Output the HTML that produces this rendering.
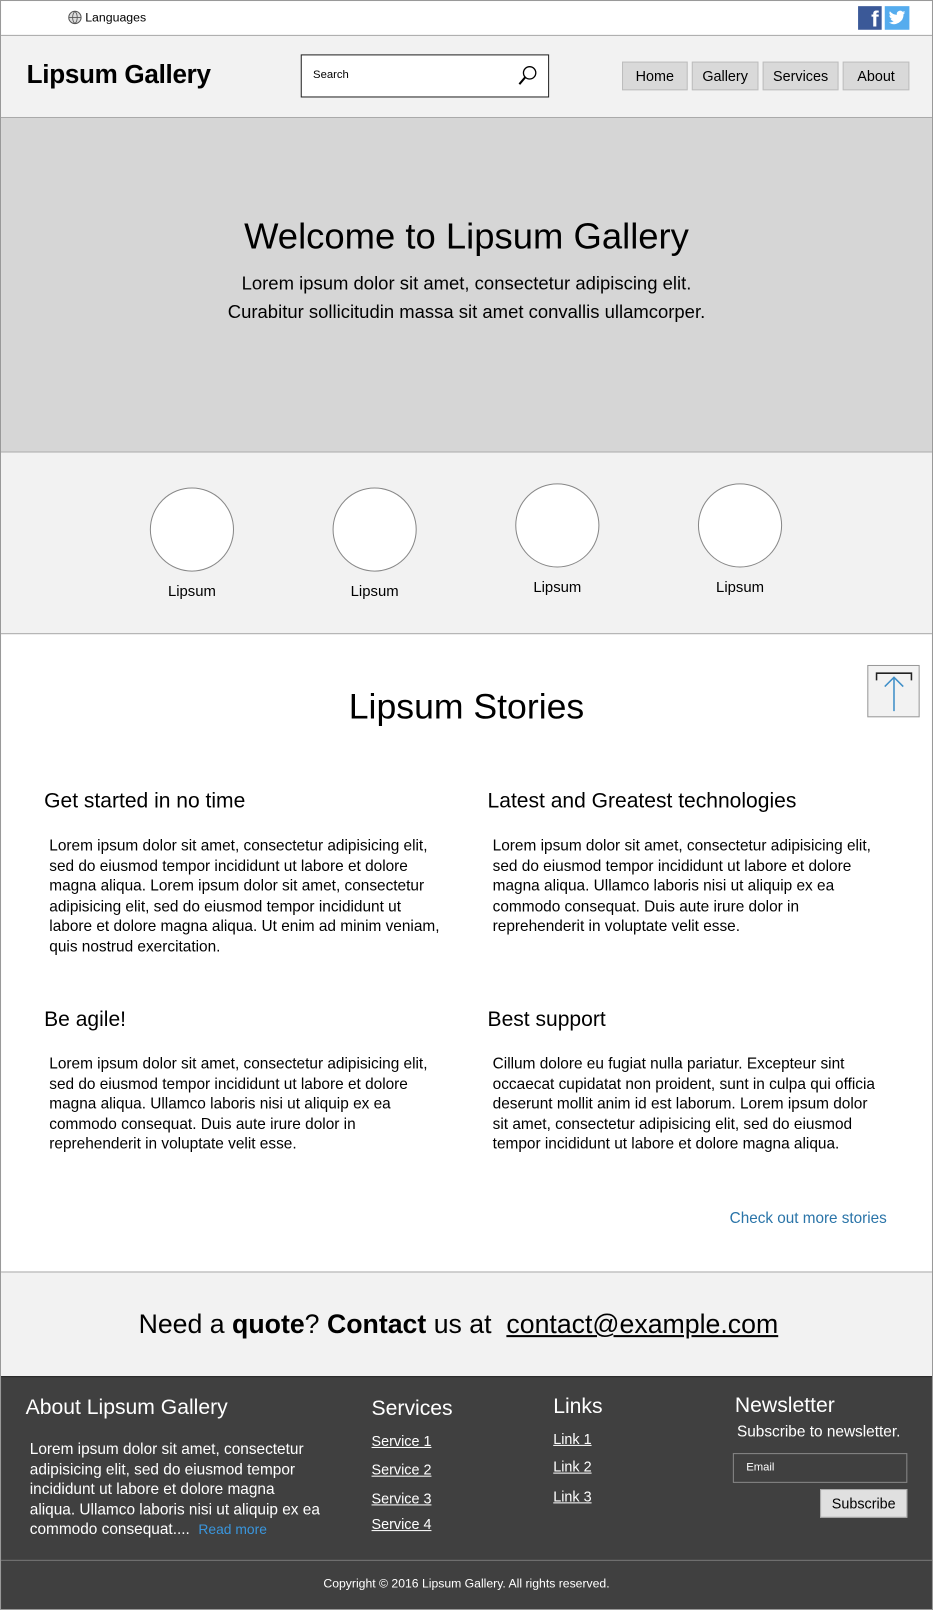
<!DOCTYPE html>
<html><head><meta charset="utf-8">
<style>
*{margin:0;padding:0;box-sizing:border-box}
html,body{width:933px;height:1610px;overflow:hidden;background:#fff}
#w{position:absolute;left:0;top:0;width:909px;height:1569px;transform:scale(1.0264,1.0262);transform-origin:0 0;font-family:"Liberation Sans",sans-serif;color:#000}
.a{position:absolute}
.sec{position:absolute;left:1px;width:907px}
.nav{position:absolute;top:60px;height:28px;background:#d9d9d9;border:1px solid #bdbdbd;font-size:14px;text-align:center;line-height:26px}
.circ{position:absolute;width:82px;height:82px;border-radius:50%;border:1px solid #888;background:#fff}
.lbl{position:absolute;font-size:14.5px;width:100px;text-align:center}
.h3{position:absolute;font-size:20.5px;white-space:nowrap}
.p{position:absolute;font-size:15px;line-height:19.5px;white-space:nowrap}
.fl{color:#fff;text-decoration:underline;font-size:14px;position:absolute}
</style></head><body><div id="w">
<div class="a" style="left:0;top:0;width:909px;height:1569px;border:1px solid #999"></div>
<!-- top bar -->
<svg class="a" style="left:66px;top:10px" width="14" height="14" viewBox="0 0 14 14"><circle cx="7" cy="7" r="6" fill="#ddd" stroke="#555"/><path d="M1 7h12M7 1c-3 3-3 9 0 12M7 1c3 3 3 9 0 12" fill="none" stroke="#555" stroke-width=".8"/></svg>
<div class="a" style="left:83px;top:10px;font-size:12px">Languages</div>
<div class="a" style="left:836px;top:6px;width:23px;height:23px;background:#3b5998;color:#fff;font-weight:bold;font-size:22px;text-align:right;padding-right:3px;line-height:26px;overflow:hidden">f</div>
<div class="a" style="left:862px;top:6px;width:24px;height:23px;background:#55acee">
<svg width="24" height="23" viewBox="0 0 24 23"><path d="M20 6c-.6.3-1.2.4-1.9.5.7-.4 1.2-1 1.4-1.8-.6.4-1.3.6-2.1.8a3.3 3.3 0 0 0-5.6 3A9.3 9.3 0 0 1 5 5a3.3 3.3 0 0 0 1 4.4c-.5 0-1-.2-1.5-.4 0 1.600 1.100 2.900 2.600 3.200-.5.100-1 .200-1.500.100.400 1.300 1.600 2.300 3.100 2.300A6.600 6.600 0 0 1 4 16a9.300 9.300 0 0 0 14.300-8.300c.7-.5 1.200-1 1.700-1.700z" fill="#fff"/></svg></div>
<!-- header -->
<div class="sec" style="top:34px;height:81px;background:#f2f2f2;border-top:1px solid #aaa;border-bottom:1px solid #aaa"></div>
<div class="a" style="left:26px;top:59px;font-size:25.4px;font-weight:bold;letter-spacing:-0.3px">Lipsum Gallery</div>
<div class="a" style="left:293px;top:53px;width:242px;height:42px;border:1px solid #222;background:#fff"></div>
<div class="a" style="left:305px;top:67px;font-size:11px">Search</div>
<svg class="a" style="left:503px;top:63px" width="22" height="22" viewBox="0 0 22 22"><circle cx="13" cy="8" r="6" fill="none" stroke="#000" stroke-width="1.3"/><path d="M9 12 3 19" stroke="#000" stroke-width="2"/></svg>
<div class="nav" style="left:606px;width:64px">Home</div>
<div class="nav" style="left:674px;width:65px">Gallery</div>
<div class="nav" style="left:743px;width:74px">Services</div>
<div class="nav" style="left:821px;width:65px">About</div>
<!-- hero -->
<div class="sec" style="top:115px;height:326px;background:#d6d6d6;border-bottom:1px solid #aaa"></div>
<div class="a" style="left:0;width:909px;top:210px;text-align:center;font-size:35.5px">Welcome to Lipsum Gallery</div>
<div class="a" style="left:0;width:909px;top:262px;text-align:center;font-size:18px;line-height:28px">Lorem ipsum dolor sit amet, consectetur adipiscing elit.<br>Curabitur sollicitudin massa sit amet convallis ullamcorper.</div>
<!-- circles -->
<div class="sec" style="top:441px;height:177px;background:#f2f2f2;border-bottom:1px solid #aaa"></div>
<div class="circ" style="left:146px;top:475px"></div><div class="lbl" style="left:137px;top:569px">Lipsum</div>
<div class="circ" style="left:324px;top:475px"></div><div class="lbl" style="left:315px;top:569px">Lipsum</div>
<div class="circ" style="left:502px;top:471px"></div><div class="lbl" style="left:493px;top:565px">Lipsum</div>
<div class="circ" style="left:680px;top:471px"></div><div class="lbl" style="left:671px;top:565px">Lipsum</div>
<!-- stories -->
<div class="a" style="left:0;width:909px;top:670px;text-align:center;font-size:34.7px">Lipsum Stories</div>
<div class="a" style="left:845px;top:648px;width:51px;height:51px;border:1px solid #999;background:#f2f2f2">
<svg width="49" height="49" viewBox="0 0 49 49"><path d="M8 14V7h34v7" fill="none" stroke="#222" stroke-width="1.5"/><path d="M25 44V11M16 20l9-9 9 9" fill="none" stroke="#3f8fc8" stroke-width="1.5"/></svg></div>
<div class="h3" style="left:43px;top:769px">Get started in no time</div>
<div class="h3" style="left:475px;top:769px">Latest and Greatest technologies</div>
<div class="p" style="left:48px;top:815px">Lorem ipsum dolor sit amet, consectetur adipisicing elit,<br>sed do eiusmod tempor incididunt ut labore et dolore<br>magna aliqua. Lorem ipsum dolor sit amet, consectetur<br>adipisicing elit, sed do eiusmod tempor incididunt ut<br>labore et dolore magna aliqua. Ut enim ad minim veniam,<br>quis nostrud exercitation.</div>
<div class="p" style="left:480px;top:815px">Lorem ipsum dolor sit amet, consectetur adipisicing elit,<br>sed do eiusmod tempor incididunt ut labore et dolore<br>magna aliqua. Ullamco laboris nisi ut aliquip ex ea<br>commodo consequat. Duis aute irure dolor in<br>reprehenderit in voluptate velit esse.</div>
<div class="h3" style="left:43px;top:982px">Be agile!</div>
<div class="h3" style="left:475px;top:982px">Best support</div>
<div class="p" style="left:48px;top:1027px">Lorem ipsum dolor sit amet, consectetur adipisicing elit,<br>sed do eiusmod tempor incididunt ut labore et dolore<br>magna aliqua. Ullamco laboris nisi ut aliquip ex ea<br>commodo consequat. Duis aute irure dolor in<br>reprehenderit in voluptate velit esse.</div>
<div class="p" style="left:480px;top:1027px">Cillum dolore eu fugiat nulla pariatur. Excepteur sint<br>occaecat cupidatat non proident, sunt in culpa qui officia<br>deserunt mollit anim id est laborum. Lorem ipsum dolor<br>sit amet, consectetur adipisicing elit, sed do eiusmod<br>tempor incididunt ut labore et dolore magna aliqua.</div>
<div class="a" style="right:45px;top:1180px;font-size:14.9px;color:#2a74a8">Check out more stories</div>
<!-- quote -->
<div class="sec" style="top:1239px;height:102px;background:#f2f2f2;border-top:1px solid #aaa"></div>
<div class="a" style="left:135px;top:1275px;font-size:26px;white-space:nowrap">Need a <b>quote</b>? <b>Contact</b> us at &nbsp;<span style="text-decoration:underline">contact@example.com</span></div>
<!-- footer -->
<div class="sec" style="top:1341px;height:227px;background:#404040;border-top:1px solid #222"></div>
<div class="a" style="left:1px;top:1520px;width:907px;height:1px;background:#777"></div>
<div class="a" style="left:25px;top:1360px;font-size:20.6px;color:#fff">About Lipsum Gallery</div>
<div class="p" style="left:29px;top:1403px;color:#fff;font-size:15px">Lorem ipsum dolor sit amet, consectetur<br>adipisicing elit, sed do eiusmod tempor<br>incididunt ut labore et dolore magna<br>aliqua. Ullamco laboris nisi ut aliquip ex ea<br>commodo consequat....&nbsp; <span style="color:#3a96dd;font-size:13.5px">Read more</span></div>
<div class="a" style="left:362px;top:1361px;font-size:20.6px;color:#fff">Services</div>
<div class="fl" style="left:362px;top:1396px">Service 1</div>
<div class="fl" style="left:362px;top:1424px">Service 2</div>
<div class="fl" style="left:362px;top:1452px">Service 3</div>
<div class="fl" style="left:362px;top:1477px">Service 4</div>
<div class="a" style="left:539px;top:1359px;font-size:20.6px;color:#fff">Links</div>
<div class="fl" style="left:539px;top:1394px">Link 1</div>
<div class="fl" style="left:539px;top:1421px">Link 2</div>
<div class="fl" style="left:539px;top:1450px">Link 3</div>
<div class="a" style="left:716px;top:1358px;font-size:20.6px;color:#fff">Newsletter</div>
<div class="a" style="left:718px;top:1387px;font-size:15px;color:#fff">Subscribe to newsletter.</div>
<div class="a" style="left:714px;top:1416px;width:170px;height:29px;border:1px solid #888"></div>
<div class="a" style="left:727px;top:1424px;font-size:11px;color:#fff">Email</div>
<div class="a" style="left:799px;top:1451px;width:85px;height:28px;background:#e0e0e0;border:1px solid #aaa;font-size:14px;text-align:center;line-height:26px">Subscribe</div>
<div class="a" style="left:0;width:909px;top:1536px;text-align:center;font-size:11.9px;color:#fff">Copyright © 2016 Lipsum Gallery. All rights reserved.</div>
</div></body></html>
